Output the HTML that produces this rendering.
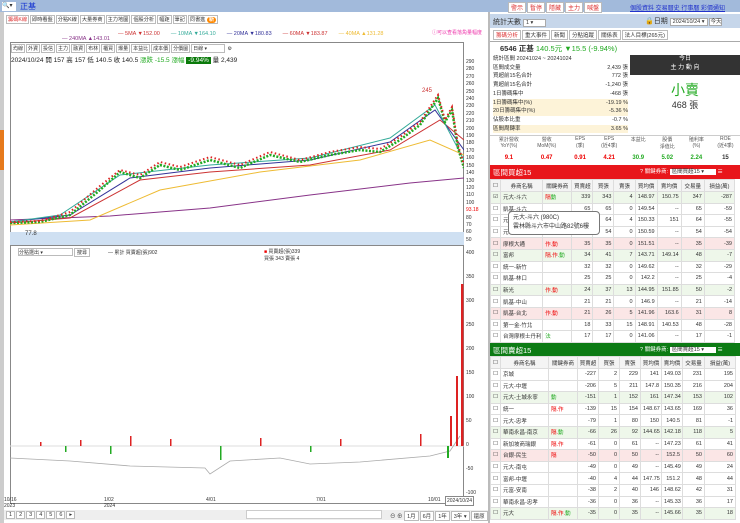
<!DOCTYPE html><html><head><meta charset="utf-8"><style>
*{margin:0;padding:0;box-sizing:border-box}
body{width:740px;height:523px;overflow:hidden;background:#fff;font-family:"Liberation Sans","Noto Sans CJK TC",sans-serif;font-size:6px;color:#333;position:relative}
.a{position:absolute;white-space:nowrap}
.tab{display:inline-block;border:1px solid #bbb;padding:0 2px;background:#fff;margin-right:1px}
.sm .tab{padding:0 1px}
table{border-collapse:collapse;width:100%;table-layout:fixed}
td{border:1px solid #ddd;height:11.6px;padding:0 2px;text-align:right;font-size:5.5px;overflow:hidden;white-space:nowrap}
td.l{text-align:left}
tr.g td{background:#eef7ea}tr.r td{background:#fbe6e6}
th{border:1px solid #ddd;height:12px;font-weight:normal;font-size:5.5px;background:#f4f4f4}
.R{color:#e00}.G{color:#2a2}
</style></head><body>
<div class="a" style="left:0;top:0;width:740px;height:12px;background:#a2badb"></div>
<div class="a" style="left:2px;top:2px;width:14px;height:9px;background:#fff;font-size:6px">🔍▾</div>
<div class="a" style="left:20px;top:1px;font-size:8px;color:#1030d0">正基</div>
<div class="a" style="left:508px;top:2px;font-size:6px"><span class="tab" style="color:#d33;padding:0 2px">警示</span><span class="tab" style="color:#d33;padding:0 2px">暫停</span><span class="tab" style="color:#d33;padding:0 2px">隱藏</span><span class="tab" style="color:#d33;padding:0 2px">主力</span><span class="tab" style="color:#d33;padding:0 2px">喊盤</span></div>
<div class="a" style="left:630px;top:3px;font-size:6px;color:#23c;text-decoration:underline">個股資料 交易曆史 行事曆 彩價通知</div>
<!-- left -->
<div class="a" style="left:0;top:12px;width:4px;height:511px;background:#ccc"></div>
<div class="a" style="left:0;top:130px;width:4px;height:40px;background:#e67a1c"></div>
<div class="a sm" style="left:6px;top:15px;font-size:5.2px"><span class="tab" style="color:#d33">籌碼K線</span><span class="tab">即時看盤</span><span class="tab">分點K線</span><span class="tab">大量券商</span><span class="tab">主力地圖</span><span class="tab">個股分析</span><span class="tab">幅距</span><span class="tab">筆記</span><span class="tab">同書進 <b style="background:#f80;color:#fff;border-radius:4px;padding:0 2px">新</b></span></div>
<div class="a" style="left:118px;top:29px;font-size:5.5px"><span style="color:#c33">— 5MA ▼152.00</span>　　<span style="color:#3a9">— 10MA ▼164.10</span>　　<span style="color:#339">— 20MA ▼180.83</span>　　<span style="color:#c33">— 60MA ▼183.87</span>　　<span style="color:#eb3">— 40MA ▲131.28</span></div>
<div class="a" style="left:62px;top:36px;font-size:5.5px;color:#838">— 240MA ▲143.01</div>
<div class="a" style="left:432px;top:29px;font-size:5px;color:#e3a">ⓘ可以查看落角量幅度</div>
<div class="a" style="left:10px;top:42px;width:454px;height:462px;border:1px solid #888"></div>
<div class="a sm" style="left:11px;top:44px;font-size:5px"><span class="tab">均線</span><span class="tab">外資</span><span class="tab">投信</span><span class="tab">主力</span><span class="tab">融資</span><span class="tab">布林</span><span class="tab">櫃買</span><span class="tab">爆量</span><span class="tab">本益比</span><span class="tab">成本價</span><span class="tab">分價圖</span><span class="tab" style="width:34px">日線 ▾</span> ⚙</div>
<div class="a" style="left:11px;top:54px;font-size:6.5px;color:#222">2024/10/24 開 157 高 157 低 140.5 收 140.5 <span class="G">漲跌 -15.5 漲幅</span> <span style="background:#0a7a0a;color:#fff;padding:0 2px">-9.94%</span> 量 2,439</div>
<div class="a" style="left:466px;top:59px;font-size:5px;line-height:7.4px;color:#333">290<br>280<br>270<br>260<br>250<br>240<br>230<br>220<br>210<br>200<br>190<br>180<br>170<br>160<br>150<br>140<br>130<br>120<br>110<br>100<br><span class="R">93.18</span><br>80<br>70<br>60<br>50</div>
<svg class="a" style="left:10px;top:60px" width="454" height="186">
<rect x="0" y="172" width="454" height="13" fill="#cfe0f2"/>
<polyline fill="none" stroke="#838" stroke-width="1" points="0,160 100,156 200,148 300,135 400,123 454,118"/>
<polyline fill="none" stroke="#eb3" stroke-width="1" points="0,165 80,160 150,130 250,112 350,100 420,80 454,95"/>
<polyline fill="none" stroke="#c33" stroke-width="1" points="0,163 60,158 130,120 200,112 300,105 380,90 430,60 454,80"/>
<polyline fill="none" stroke="#339" stroke-width="1" points="0,162 60,155 120,118 200,108 300,100 380,82 425,50 454,90"/>
<polyline fill="none" stroke="#3a9" stroke-width="1" points="0,162 50,155 110,115 200,105 300,98 380,78 425,45 454,100"/>
<polyline fill="none" stroke="#2a2" stroke-width="2.5" stroke-dasharray="2 1.5" points="0,163 30,162 60,155 90,130 110,112 130,118 150,105 170,110 200,100 230,108 260,95 290,102 320,95 350,90 370,92 390,80 410,65 420,50 428,38 435,62 442,50 448,88 454,108"/>
<polyline fill="none" stroke="#d22" stroke-width="2" stroke-dasharray="1.5 2.5" points="0,162 30,161 60,152 90,126 110,110 130,115 150,102 170,107 200,97 230,105 260,92 290,100 320,92 350,87 370,89 390,77 410,62 420,47 428,35 435,60 442,47 448,85 454,105"/>
<text x="412" y="32" font-size="6" fill="#c33">245</text><text x="15" y="175" font-size="6" fill="#333">77.8</text>
</svg>
<div class="a" style="left:10px;top:245px;width:454px;height:1px;background:#888"></div>
<div class="a" style="left:18px;top:248px;width:55px;height:8px;border:1px solid #bbb;font-size:5px">分點選出 ▾</div>
<div class="a" style="left:74px;top:248px;font-size:5px" ><span class="tab">搜尋</span></div>
<div class="a" style="left:108px;top:249px;font-size:5px">— 累計 買賣超(張)902</div>
<div class="a" style="left:264px;top:249px;font-size:5px;line-height:7px"><span class="R">■</span> 買賣超(張)339<br>買張 343 賣張 4</div>
<div class="a" style="left:466px;top:241px;font-size:5px;line-height:24px">400<br>350<br>300<br>250<br>200<br>150<br>100<br>50<br>0<br>-50<br>-100</div>
<svg class="a" style="left:10px;top:256px" width="454" height="248">
<line x1="0" y1="190" x2="454" y2="190" stroke="#ddd"/>
<polyline fill="none" stroke="#aaa" stroke-width=".8" points="0,202 60,205 120,210 195,212 200,218 220,205 270,202 300,208 350,206 420,200 440,195 450,180"/>
<g fill="#d22"><rect x="30" y="186" width="1.5" height="4"/><rect x="70" y="184" width="1.5" height="6"/><rect x="120" y="180" width="1.5" height="10"/><rect x="160" y="183" width="1.5" height="7"/><rect x="250" y="182" width="1.5" height="8"/><rect x="330" y="183" width="1.5" height="7"/><rect x="410" y="178" width="1.5" height="12"/><rect x="440" y="160" width="2" height="30"/><rect x="446" y="120" width="2" height="70"/><rect x="451" y="28" width="2.5" height="162"/></g>
<g fill="#2a2"><rect x="55" y="190" width="1.5" height="6"/><rect x="100" y="190" width="1.5" height="8"/><rect x="210" y="190" width="1.5" height="14"/><rect x="300" y="190" width="1.5" height="6"/><rect x="437" y="190" width="2" height="12"/></g>
</svg>
<div class="a" style="left:4px;top:497px;font-size:5px;line-height:6px">10/16<br>2023</div>
<div class="a" style="left:104px;top:497px;font-size:5px;line-height:6px">1/02<br>2024</div>
<div class="a" style="left:206px;top:497px;font-size:5px">4/01</div>
<div class="a" style="left:316px;top:497px;font-size:5px">7/01</div>
<div class="a" style="left:428px;top:497px;font-size:5px">10/01</div>
<div class="a" style="left:445px;top:496px;font-size:5px;border:1px solid #888;background:#fff;padding:1px">2024/10/24</div>
<div class="a" style="left:4px;top:510px;width:484px;height:10px;background:#eee"></div>
<div class="a" style="left:6px;top:511px;font-size:5.5px"><span class="tab">1</span><span class="tab">2</span><span class="tab">3</span><span class="tab">4</span><span class="tab">5</span><span class="tab">6</span><span class="tab">▸</span></div>
<div class="a" style="left:246px;top:510px;width:136px;height:9px;border:1px solid #ccc;background:#fff"></div>
<div class="a" style="left:390px;top:511px;font-size:5.5px">⊖ ⊕ <span class="tab">1月</span><span class="tab">6月</span><span class="tab">1年</span><span class="tab">3年 ▾</span><span class="tab">還原</span></div>
<div class="a" style="left:488px;top:12px;width:2px;height:511px;background:#bbb"></div>
<!-- right -->
<div class="a" style="left:490px;top:14px;width:250px;height:14px;background:#c6d6ea"></div>
<div class="a" style="left:493px;top:17px;font-size:7px">統計天數 <span style="background:#fff;border:1px solid #aaa;font-size:5.5px;padding:0 12px 0 2px">1 ▾</span></div>
<div class="a" style="left:645px;top:16px;font-size:7px">🔒日期 <span style="background:#fff;border:1px solid #aaa;font-size:5.5px;padding:0 2px">2024/10/24 ▾</span> <span style="background:#fff;border:1px solid #aaa;font-size:5.5px">今天</span></div>
<div class="a" style="left:493px;top:30px;font-size:5.5px"><span class="tab" style="color:#d33">籌碼分析</span><span class="tab">重大事件</span><span class="tab">新聞</span><span class="tab">分點追蹤</span><span class="tab">關係表</span><span class="tab">法人目標(265元)</span></div>
<div class="a" style="left:490px;top:41px;width:250px;height:13px;border-top:1px solid #aaa"></div>
<div class="a" style="left:500px;top:43px;font-size:7.5px"><b>6546 正基</b> <span class="G">140.5元 ▼15.5 (-9.94%)</span></div>
<div class="a" style="left:493px;top:55px;font-size:5.5px;line-height:8.7px;width:135px">
<div>統計區間 20241024 ~ 20241024</div>
<div>區間成交量<span style="float:right">2,439 張</span></div>
<div>買超前15名合計<span style="float:right">772 張</span></div>
<div>賣超前15名合計<span style="float:right">-1,240 張</span></div>
<div>1日籌碼集中<span style="float:right">-468 張</span></div>
<div style="background:#fdf3d8">1日籌碼集中(%)<span style="float:right">-19.19 %</span></div>
<div style="background:#fdf3d8">20日籌碼集中(%)<span style="float:right">-5.36 %</span></div>
<div>佔股本比重<span style="float:right">-0.7 %</span></div>
<div style="background:#fdf3d8">區間周轉率<span style="float:right">3.65 %</span></div></div>
<div class="a" style="left:630px;top:55px;width:110px;height:20px;background:#333;color:#fff;font-size:6px;text-align:center;line-height:9px">今日<br>主 力 動 向</div>
<div class="a" style="left:630px;top:80px;width:110px;text-align:center;font-size:14px;color:#2a2">小賣</div>
<div class="a" style="left:630px;top:98px;width:110px;text-align:center;font-size:9px;color:#333">468 張</div>
<div class="a" style="left:490px;top:135px;width:250px;height:1px;background:#ccc"></div>
<div class="a" style="left:490px;top:136px;width:250px;font-size:5px;display:flex;text-align:center;color:#555">
<div style="flex:1.3">累計營收<br>YoY(%)</div><div style="flex:1.3">營收<br>MoM(%)</div><div style="flex:1">EPS<br>(季)</div><div style="flex:1">EPS<br>(近4季)</div><div style="flex:1">本益比</div><div style="flex:1">股價<br>淨值比</div><div style="flex:1">殖利率<br>(%)</div><div style="flex:1">ROE<br>(近4季)</div></div>
<div class="a" style="left:490px;top:155px;width:250px;font-size:6px;display:flex;text-align:center;font-weight:bold">
<div style="flex:1.3" class="R">9.1</div><div style="flex:1.3" class="R">0.47</div><div style="flex:1" class="R">0.91</div><div style="flex:1" class="R">4.21</div><div style="flex:1" class="G">30.9</div><div style="flex:1" class="G">5.02</div><div style="flex:1" class="G">2.24</div><div style="flex:1">15</div></div>
<div class="a" style="left:490px;top:165px;width:250px;height:14px;background:#e8161b"></div>
<div class="a" style="left:493px;top:167px;font-size:7.5px;color:#fff">區間買超15</div>
<div class="a" style="left:640px;top:167px;font-size:5.5px;color:#fff">? 關鍵券商: <span style="background:#fff;color:#333;padding:0 12px 0 2px">區間買超15 ▾</span> ☰</div>
<div class="a" style="left:490px;top:179px;width:245px">
<table><colgroup><col style="width:10px"><col style="width:42px"><col style="width:29px"><col style="width:21px"><col style="width:21px"><col style="width:21px"><col style="width:22px"><col style="width:24px"><col style="width:23px"><col style="width:30px"></colgroup>
<tr><th>☐</th><th>券商名稱</th><th>關鍵券商</th><th>買賣超</th><th>買張</th><th>賣張</th><th>買均價</th><th>賣均價</th><th>交易量</th><th>損益(萬)</th></tr>
<tr class="g"><td>☑</td><td class="l">元大-斗六</td><td class="l"><span class="R">隔</span><span class="G">動</span></td><td>339</td><td>343</td><td>4</td><td>148.97</td><td>150.75</td><td>347</td><td>-287</td></tr>
<tr><td>☐</td><td class="l">凱基-斗六</td><td></td><td>65</td><td>65</td><td>0</td><td>149.54</td><td>--</td><td>65</td><td>-59</td></tr>
<tr><td>☐</td><td class="l">元</td><td></td><td>60</td><td>64</td><td>4</td><td>150.33</td><td>151</td><td>64</td><td>-55</td></tr>
<tr><td>☐</td><td class="l">元</td><td></td><td>54</td><td>54</td><td>0</td><td>150.59</td><td>--</td><td>54</td><td>-54</td></tr>
<tr class="r"><td>☐</td><td class="l">摩根大通</td><td class="l R">作.動</td><td>35</td><td>35</td><td>0</td><td>151.51</td><td>--</td><td>35</td><td>-39</td></tr>
<tr class="g"><td>☐</td><td class="l">富邦</td><td class="l"><span class="R">隔.作</span><span class="G">.動</span></td><td>34</td><td>41</td><td>7</td><td>143.71</td><td>149.14</td><td>48</td><td>-7</td></tr>
<tr><td>☐</td><td class="l">統一-新竹</td><td></td><td>32</td><td>32</td><td>0</td><td>149.62</td><td>--</td><td>32</td><td>-29</td></tr>
<tr><td>☐</td><td class="l">凱基-林口</td><td></td><td>25</td><td>25</td><td>0</td><td>142.2</td><td>--</td><td>25</td><td>-4</td></tr>
<tr class="g"><td>☐</td><td class="l">新光</td><td class="l R">作.動</td><td>24</td><td>37</td><td>13</td><td>144.95</td><td>151.85</td><td>50</td><td>-2</td></tr>
<tr><td>☐</td><td class="l">凱基-中山</td><td></td><td>21</td><td>21</td><td>0</td><td>146.9</td><td>--</td><td>21</td><td>-14</td></tr>
<tr class="r"><td>☐</td><td class="l">凱基-台北</td><td class="l R">作.動</td><td>21</td><td>26</td><td>5</td><td>141.96</td><td>163.6</td><td>31</td><td>8</td></tr>
<tr><td>☐</td><td class="l">第一金-竹北</td><td></td><td>18</td><td>33</td><td>15</td><td>148.91</td><td>140.53</td><td>48</td><td>-28</td></tr>
<tr><td>☐</td><td class="l">台灣摩根士丹利</td><td class="l G">法</td><td>17</td><td>17</td><td>0</td><td>141.06</td><td>--</td><td>17</td><td>-1</td></tr>
</table></div>
<div class="a" style="left:508px;top:211px;width:92px;height:24px;background:#fff;border:1px solid #777;border-radius:4px;font-size:6px;padding:2px 4px;line-height:9px">元大-斗六 (980C)<br>雲林縣斗六市中山路82號6樓</div>
<div class="a" style="left:490px;top:343px;width:250px;height:13px;background:#0c7b14"></div>
<div class="a" style="left:493px;top:345px;font-size:7.5px;color:#fff">區間賣超15</div>
<div class="a" style="left:640px;top:345px;font-size:5.5px;color:#fff">? 關鍵券商: <span style="background:#fff;color:#333;padding:0 12px 0 2px">區間賣超15 ▾</span> ☰</div>
<div class="a" style="left:490px;top:356px;width:245px">
<table><colgroup><col style="width:10px"><col style="width:48px"><col style="width:29px"><col style="width:21px"><col style="width:21px"><col style="width:21px"><col style="width:21px"><col style="width:21px"><col style="width:22px"><col style="width:31px"></colgroup>
<tr><th>☐</th><th>券商名稱</th><th>關鍵券商</th><th>買賣超</th><th>買張</th><th>賣張</th><th>買均價</th><th>賣均價</th><th>交易量</th><th>損益(萬)</th></tr>
<tr><td>☐</td><td class="l">京城</td><td></td><td>-227</td><td>2</td><td>229</td><td>141</td><td>149.03</td><td>231</td><td>195</td></tr>
<tr><td>☐</td><td class="l">元大-中壢</td><td></td><td>-206</td><td>5</td><td>211</td><td>147.8</td><td>150.35</td><td>216</td><td>204</td></tr>
<tr class="g"><td>☐</td><td class="l">元大-土城永寧</td><td class="l G">動</td><td>-151</td><td>1</td><td>152</td><td>161</td><td>147.34</td><td>153</td><td>102</td></tr>
<tr><td>☐</td><td class="l">統一</td><td class="l R">隔.作</td><td>-139</td><td>15</td><td>154</td><td>148.67</td><td>143.65</td><td>169</td><td>36</td></tr>
<tr><td>☐</td><td class="l">元大-忠孝</td><td></td><td>-79</td><td>1</td><td>80</td><td>150</td><td>140.5</td><td>81</td><td>-1</td></tr>
<tr class="g"><td>☐</td><td class="l">華南永昌-南京</td><td class="l"><span class="R">隔.</span><span class="G">動</span></td><td>-66</td><td>26</td><td>92</td><td>144.65</td><td>142.18</td><td>118</td><td>5</td></tr>
<tr><td>☐</td><td class="l">新加坡商瑞銀</td><td class="l R">隔.作</td><td>-61</td><td>0</td><td>61</td><td>--</td><td>147.23</td><td>61</td><td>41</td></tr>
<tr class="r"><td>☐</td><td class="l">台銀-民生</td><td class="l R">隔</td><td>-50</td><td>0</td><td>50</td><td>--</td><td>152.5</td><td>50</td><td>60</td></tr>
<tr><td>☐</td><td class="l">元大-南屯</td><td></td><td>-49</td><td>0</td><td>49</td><td>--</td><td>145.49</td><td>49</td><td>24</td></tr>
<tr><td>☐</td><td class="l">富邦-中壢</td><td></td><td>-40</td><td>4</td><td>44</td><td>147.75</td><td>151.2</td><td>48</td><td>44</td></tr>
<tr><td>☐</td><td class="l">元富-安南</td><td></td><td>-38</td><td>2</td><td>40</td><td>146</td><td>148.62</td><td>42</td><td>31</td></tr>
<tr><td>☐</td><td class="l">華南永昌-忠孝</td><td></td><td>-36</td><td>0</td><td>36</td><td>--</td><td>145.33</td><td>36</td><td>17</td></tr>
<tr class="g"><td>☐</td><td class="l">元大</td><td class="l"><span class="R">隔.作.</span><span class="G">動</span></td><td>-35</td><td>0</td><td>35</td><td>--</td><td>145.66</td><td>35</td><td>18</td></tr>
</table></div>
</body></html>
